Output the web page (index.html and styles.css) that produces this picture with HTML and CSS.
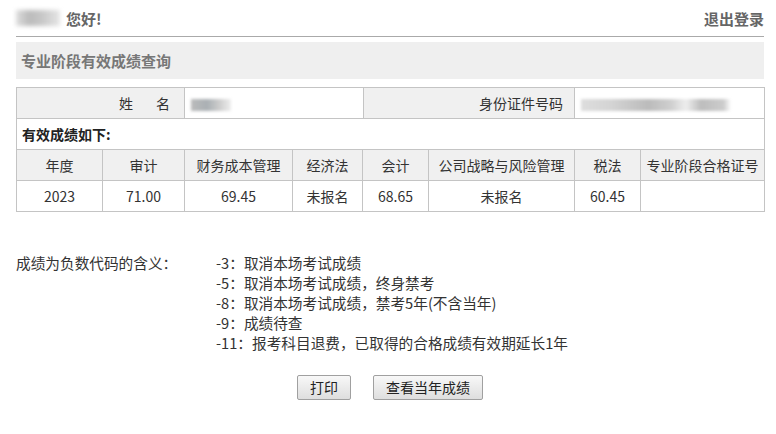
FILE: index.html
```html
<!DOCTYPE html>
<html lang="zh-CN">
<head>
<meta charset="utf-8">
<title>专业阶段有效成绩查询</title>
<link rel="stylesheet" href="styles.css">
</head>
<body>
<div class="page">
  <div class="topbar">
    <div class="greet"><span class="blur-name"></span><span class="hello">您好!</span></div>
    <a class="logout">退出登录</a>
  </div>
  <div class="title-box">专业阶段有效成绩查询</div>
  <table class="info">
    <colgroup>
      <col class="c-name-lbl"><col class="c-name-val"><col class="c-id-lbl"><col class="c-id-val">
    </colgroup>
    <tr>
      <td class="lbl lbl-name">姓<span class="sp"></span>名</td>
      <td class="val"><span class="blur-val short"></span></td>
      <td class="lbl lbl-id">身份证件号码</td>
      <td class="val"><span class="blur-val long"></span></td>
    </tr>
  </table>
  <table class="scores">
    <colgroup>
      <col class="c1"><col class="c2"><col class="c3"><col class="c4">
      <col class="c5"><col class="c6"><col class="c7"><col class="c8">
    </colgroup>
    <tr><td class="sub" colspan="8">有效成绩如下:</td></tr>
    <tr class="head">
      <td>年度</td><td>审计</td><td>财务成本管理</td><td>经济法</td><td>会计</td><td>公司战略与风险管理</td><td>税法</td><td>专业阶段合格证号</td>
    </tr>
    <tr>
      <td>2023</td><td>71.00</td><td>69.45</td><td>未报名</td><td>68.65</td><td>未报名</td><td>60.45</td><td></td>
    </tr>
  </table>
  <div class="legend">
    <div class="legend-title">成绩为负数代码的含义：</div>
    <ul class="legend-list">
      <li>-3：取消本场考试成绩</li>
      <li>-5：取消本场考试成绩，终身禁考</li>
      <li>-8：取消本场考试成绩，禁考5年(不含当年)</li>
      <li>-9：成绩待查</li>
      <li>-11：报考科目退费，已取得的合格成绩有效期延长1年</li>
    </ul>
  </div>
  <div class="buttons">
    <button class="btn">打印</button>
    <button class="btn">查看当年成绩</button>
  </div>
</div>
</body>
</html>
```
FILE: styles.css
```css
html, body { margin: 0; padding: 0; background: #fff; }
body {
  font-family: "Noto Sans CJK SC", "Noto Sans", sans-serif;
  font-size: 14px;
  color: #333;
}
.page {
  width: 748px;
  margin-left: 16px;
}
.topbar {
  height: 36px;
  border-bottom: 1px solid #aaa;
  display: flex;
  justify-content: space-between;
  align-items: center;
}
.greet { display: flex; align-items: center; }
.blur-name {
  display: inline-block;
  width: 44px;
  height: 16px;
  margin-left: 0;
  margin-right: 6px;
  background: linear-gradient(90deg, #ddd 0%, #bbb 30%, #c8c8c8 60%, #e6e6e6 100%);
  filter: blur(2px);
}
.hello, .logout {
  font-weight: bold;
  color: #666;
  font-size: 15px;
}
.logout { cursor: pointer; }
.title-box {
  margin-top: 5px;
  height: 37px;
  line-height: 37px;
  background: #efefef;
  color: #777;
  font-weight: bold;
  font-size: 15px;
  padding-left: 5px;
}
table {
  border-collapse: collapse;
  width: 748px;
  table-layout: fixed;
}
.info { margin-top: 8px; }
.c-name-lbl { width: 168px; }
.c-name-val { width: 179px; }
.c-id-lbl { width: 211px; }
.c-id-val { width: 190px; }
.c1 { width: 86px; }
.c2 { width: 82px; }
.c3 { width: 108px; }
.c4 { width: 70px; }
.c5 { width: 66px; }
.c6 { width: 146px; }
.c7 { width: 66px; }
.c8 { width: 124px; }
td {
  border: 1px solid #c4c4c4;
  height: 30px;
  padding: 0;
  text-align: center;
  font-size: 14px;
  color: #333;
}
.lbl { background: #f0f0f0; text-align: right; }
.lbl-name { padding-right: 14px; }
.lbl-id { padding-right: 11px; }
.info .val { text-align: left; padding-left: 6px; }
.sp { display: inline-block; width: 23px; }
.blur-val {
  display: inline-block;
  height: 12px;
  vertical-align: middle;
  filter: blur(1.5px);
}
.blur-val.short { width: 40px; background: linear-gradient(90deg, #bbb 0%, #aab0b4 40%, #ccc 70%, #eee 100%); }
.blur-val.long { width: 150px; background: linear-gradient(90deg, #ddd 0%, #d4d4d4 20%, #bbb 45%, #cfcfcf 60%, #eee 70%, #bdbdbd 80%, #ccc 95%, #fff 100%); }
.scores td { border-top: none; }
.scores .sub {
  text-align: left;
  font-weight: bold;
  padding-left: 5px;
  color: #222;
}
.scores .head td { background: #f0f0f0; }
.legend {
  display: flex;
  margin-top: 41px;
  line-height: 20px;
  font-size: 14.67px;
}
.legend-title { width: 200px; }
.legend-list {
  list-style: none;
  margin: 0;
  padding: 0;
}
.buttons {
  display: flex;
  justify-content: center;
  gap: 22px;
  margin-top: 22px;
}
.btn {
  font-family: "Noto Sans CJK SC", "Noto Sans", sans-serif;
  font-size: 14px;
  color: #222;
  height: 25px;
  padding: 0 12px;
  border: 1px solid #a0a0a0;
  border-radius: 2px;
  background: linear-gradient(#f8f8f8, #dedede);
  line-height: 21px;
}
```
